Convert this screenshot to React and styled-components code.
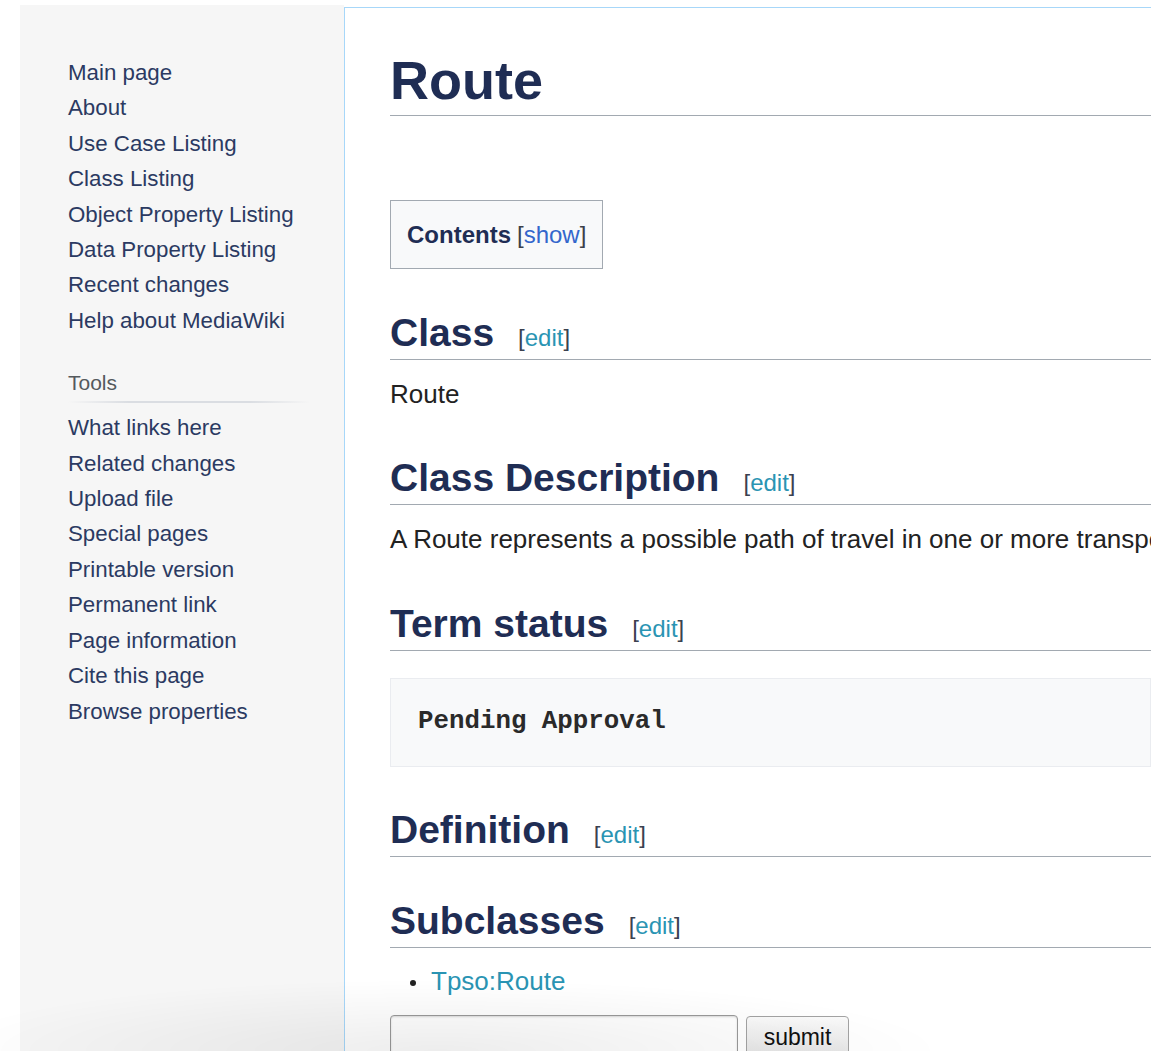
import React from "react";
import styled, { createGlobalStyle } from "styled-components";

const GlobalStyle = createGlobalStyle`
  html, body {
    margin: 0;
    padding: 0;
    background: #fff;
    overflow: hidden;
  }
  body {
    font-family: "Liberation Sans", Arial, sans-serif;
    color: #222;
  }
`;

const Page = styled.div`
  display: flex;
  padding: 5px 0 0 20px;
  min-height: 1046px;
  overflow: hidden;
  position: relative;

  &::after {
    content: "";
    position: fixed;
    left: 0;
    right: 0;
    bottom: 0;
    height: 90px;
    pointer-events: none;
    background: radial-gradient(
      ellipse 55% 100% at 38% 100%,
      rgba(0, 0, 0, 0.07),
      rgba(0, 0, 0, 0) 80%
    );
  }
`;

const Sidebar = styled.nav`
  flex: 0 0 324px;
  background: #f6f6f6;
  padding: 50px 34px 0 48px;
  box-sizing: border-box;
`;

const Portal = styled.div`
  & + & {
    margin-top: 32px;
  }
`;

const PortalTitle = styled.h3`
  margin: 0;
  font-size: 21px;
  font-weight: normal;
  line-height: 26px;
  color: #54595d;
  padding-bottom: 7px;
  background-image: linear-gradient(
    to right,
    rgba(200, 204, 209, 0) 0,
    #dadde2 25%,
    #dadde2 75%,
    rgba(200, 204, 209, 0) 100%
  );
  background-repeat: no-repeat;
  background-size: 100% 2px;
  background-position: bottom left;
`;

const NavList = styled.ul`
  list-style: none;
  margin: ${(p) => (p.$afterTitle ? "7px 0 0" : "0")};
  padding: 0;
`;

const NavLink = styled.li`
  font-size: 22.3px;
  line-height: 35.4px;
  color: #2b3a62;
  white-space: nowrap;
`;

const Content = styled.main`
  flex: 1;
  min-width: 0;
  margin-top: 2px;
  background: #fff;
  border-top: 1px solid #a7d7f9;
  border-left: 1px solid #a7d7f9;
  padding: 40px 0 0 45px;
`;

const Title = styled.h1`
  margin: 0;
  font-size: 54px;
  line-height: 64px;
  font-weight: bold;
  color: #1f2d54;
  padding-bottom: 3px;
  border-bottom: 1px solid #a2a9b1;
  white-space: nowrap;
`;

const Toc = styled.div`
  display: inline-block;
  margin-top: 84px;
  height: 67px;
  line-height: 67px;
  padding: 0 16px;
  background: #f8f9fa;
  border: 1px solid #a2a9b1;
  font-size: 24px;
  color: #3c4049;
`;

const TocTitle = styled.span`
  font-weight: bold;
  color: #1f2d54;
`;

const TocToggle = styled.span`
  font-size: 24px;
  margin-left: 6px;

  a {
    color: #3366cc;
  }
`;

const Heading = styled.h2`
  margin: ${(p) => p.$gap || 40.5}px 0 0;
  font-size: 39px;
  line-height: 46px;
  font-weight: bold;
  color: #1f2d54;
  padding-bottom: 3px;
  border-bottom: 1px solid #a2a9b1;
  white-space: nowrap;
`;

const EditSection = styled.span`
  font-size: 24px;
  line-height: 1;
  font-weight: normal;
  margin-left: 24px;
  color: #3b4150;

  a {
    color: #2a94b3;
  }
`;

const Para = styled.p`
  margin: 14px 0 0;
  font-size: 26px;
  line-height: 40.8px;
  color: #222;
  white-space: nowrap;
`;

const Pre = styled.pre`
  margin: 27px 0 0;
  padding: 26.5px 27px;
  background: #f8f9fa;
  border: 1px solid #eaecf0;
  font-family: "Liberation Mono", "Courier New", monospace;
  font-size: 25.8px;
  line-height: 34px;
  font-weight: bold;
  color: #2a2a2a;
`;

const Bullets = styled.ul`
  list-style: none;
  margin: 13px 0 0;
  padding: 0 0 0 41px;
`;

const Bullet = styled.li`
  position: relative;
  font-size: 26px;
  line-height: 40.8px;

  &::before {
    content: "";
    position: absolute;
    left: -21px;
    top: 19px;
    width: 6px;
    height: 6px;
    border-radius: 50%;
    background: #222;
  }

  a {
    color: #2a94b3;
  }
`;

const Form = styled.form`
  display: flex;
  gap: 8px;
  margin-top: 14px;
`;

const TextInput = styled.input`
  width: 348px;
  height: 42px;
  box-sizing: border-box;
  border: 1px solid #9a9a9a;
  border-radius: 4px;
  box-shadow: inset 0 1px 2px rgba(0, 0, 0, 0.15);
  background: #fff;
`;

const Submit = styled.button`
  width: 103px;
  height: 42px;
  margin-top: 1px;
  box-sizing: border-box;
  border: 1px solid #a3a3a3;
  border-radius: 4px;
  background: linear-gradient(#fafafa, #e4e4e4);
  font-family: "Liberation Sans", Arial, sans-serif;
  font-size: 23px;
  color: #111;
  padding: 0;
`;

const A = styled.a`
  text-decoration: none;
`;

const navigation = [
  "Main page",
  "About",
  "Use Case Listing",
  "Class Listing",
  "Object Property Listing",
  "Data Property Listing",
  "Recent changes",
  "Help about MediaWiki",
];

const tools = [
  "What links here",
  "Related changes",
  "Upload file",
  "Special pages",
  "Printable version",
  "Permanent link",
  "Page information",
  "Cite this page",
  "Browse properties",
];

const Edit = () => (
  <EditSection>
    [<A href="#">edit</A>]
  </EditSection>
);

export default function App() {
  return (
    <>
      <GlobalStyle />
      <Page>
        <Sidebar>
          <Portal>
            <NavList>
              {navigation.map((item) => (
                <NavLink key={item}>{item}</NavLink>
              ))}
            </NavList>
          </Portal>
          <Portal>
            <PortalTitle>Tools</PortalTitle>
            <NavList $afterTitle>
              {tools.map((item) => (
                <NavLink key={item}>{item}</NavLink>
              ))}
            </NavList>
          </Portal>
        </Sidebar>

        <Content>
          <Title>Route</Title>

          <Toc>
            <TocTitle>Contents</TocTitle>
            <TocToggle>
              [<A href="#">show</A>]
            </TocToggle>
          </Toc>

          <Heading $gap={41}>
            Class
            <Edit />
          </Heading>
          <Para>Route</Para>

          <Heading>
            Class Description
            <Edit />
          </Heading>
          <Para>
            A Route represents a possible path of travel in one or more transport
            modes.
          </Para>

          <Heading>
            Term status
            <Edit />
          </Heading>
          <Pre>Pending Approval</Pre>

          <Heading>
            Definition
            <Edit />
          </Heading>

          <Heading>
            Subclasses
            <Edit />
          </Heading>
          <Bullets>
            <Bullet>
              <A href="#">Tpso:Route</A>
            </Bullet>
          </Bullets>

          <Form onSubmit={(e) => e.preventDefault()}>
            <TextInput type="text" />
            <Submit type="submit">submit</Submit>
          </Form>
        </Content>
      </Page>
    </>
  );
}
